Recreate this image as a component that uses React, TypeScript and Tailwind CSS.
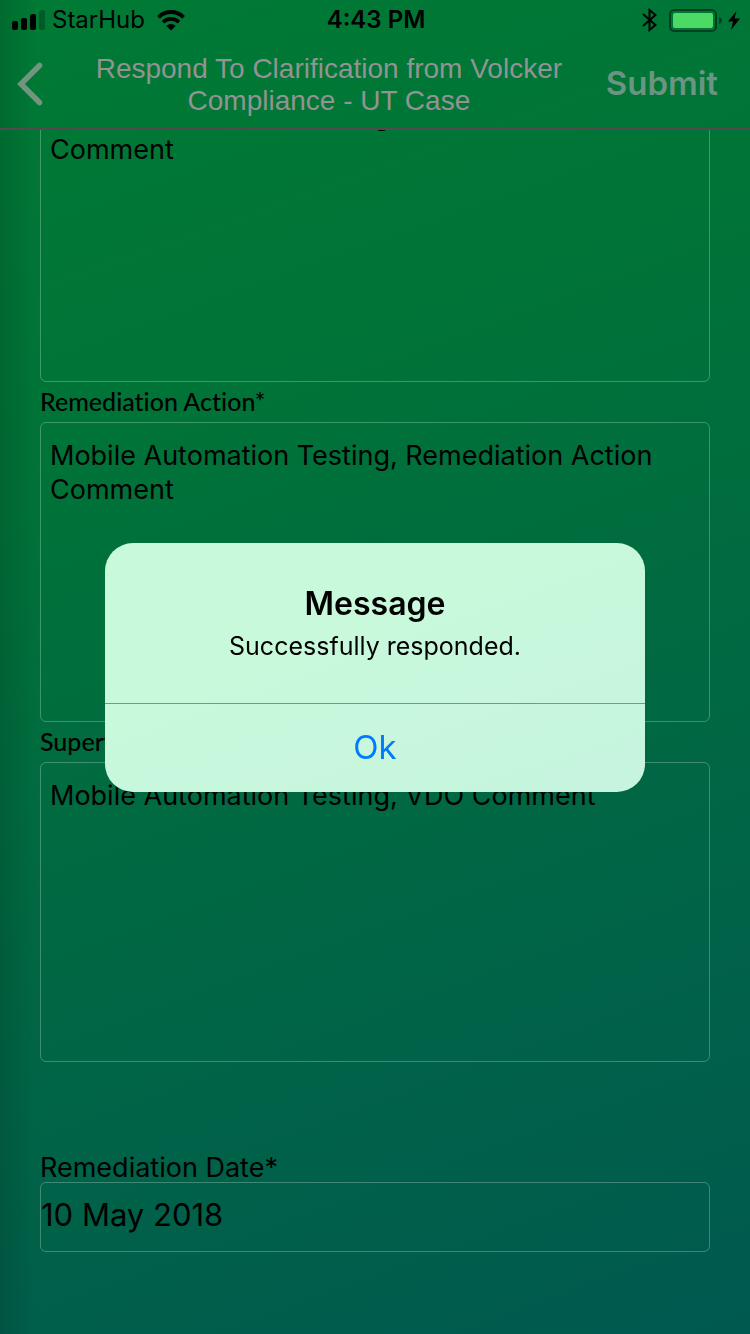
import React from "react";

function SignalIcon() {
  return (
    <svg width="34" height="20" viewBox="0 0 34 20" aria-hidden="true">
      <rect x="0" y="11" width="6" height="9" rx="2" />
      <rect x="9" y="8" width="6" height="12" rx="2" />
      <rect x="18" y="4" width="6" height="16" rx="2" />
      <rect x="27" y="0" width="6" height="20" rx="2" opacity="0.25" />
    </svg>
  );
}

function WifiIcon() {
  return (
    <svg width="28" height="21" viewBox="0 0 28 21" aria-hidden="true">
      <path d="M1.500 7.300a17.600 17.600 0 0 1 25 0" fill="none" stroke="#000" strokeWidth="4" />
      <path d="M6 12.200a11.300 11.300 0 0 1 16 0" fill="none" stroke="#000" strokeWidth="3.600" />
      <path d="M14 20.500 9.400 16a6.500 6.500 0 0 1 9.200 0z" />
    </svg>
  );
}

function BluetoothIcon() {
  return (
    <svg width="15" height="24" viewBox="0 0 15 24" aria-hidden="true">
      <path d="M1 6 13.500 17 7.500 22V2L13.500 7 1 18" fill="none" stroke="#000" strokeWidth="2" />
    </svg>
  );
}

function BatteryIcon() {
  return (
    <svg width="53" height="23" viewBox="0 0 53 23" aria-hidden="true">
      <rect x="1" y="1" width="46" height="21" rx="4.500" fill="none" stroke="#00401f" strokeWidth="2" />
      <rect x="4" y="4" width="40" height="15" rx="2" fill="#4cd964" />
      <path d="M50 8c1.700.5 3 1.900 3 3.500S51.700 14.500 50 15z" fill="#00401f" />
    </svg>
  );
}

function BoltIcon() {
  return (
    <svg width="12" height="19" viewBox="0 0 12 19" aria-hidden="true">
      <path d="M8.500 0 0 10.500h5L3 19l9-11.500H6.600z" />
    </svg>
  );
}

function CommentBox({ id, value, label }: { id: string; value: string; label?: string }) {
  return (
    <textarea
      id={id}
      aria-label={label}
      defaultValue={value}
      className="block h-[300px] w-full resize-none overflow-hidden rounded-md border border-white/25 bg-transparent px-[9px] py-4 text-[27px] leading-[34px] outline-none"
    />
  );
}

function CommentField({ id, label, value }: { id: string; label: string; value: string }) {
  return (
    <div>
      <label
        htmlFor={id}
        className="flex h-10 items-center font-['Lato',sans-serif] text-[25px] font-medium [font-variant-ligatures:none]"
      >
        {label}
      </label>
      <CommentBox id={id} value={value} />
    </div>
  );
}

export default function App() {
  return (
    <div className="relative flex h-screen flex-col overflow-hidden bg-linear-[160deg,#007a34_0%,#007338_30%,#006645_65%,#005950_100%] font-['Inter',sans-serif] text-black">
      <div className="pointer-events-none absolute inset-y-0 left-0 w-9 bg-linear-to-r from-black/12 to-transparent" />

      <header className="relative shrink-0 border-b-2 border-[#534b4b]">
        <div className="grid h-10 grid-cols-[1fr_auto_1fr] items-center pr-2.5 pl-3 text-2xl">
          <div className="flex items-center gap-1.5">
            <SignalIcon />
            <span>StarHub</span>
            <span className="pl-1.5">
              <WifiIcon />
            </span>
          </div>
          <span className="font-semibold">4:43 PM</span>
          <div className="flex items-center justify-end gap-1.5">
            <BluetoothIcon />
            <span className="pl-1.5">
              <BatteryIcon />
            </span>
            <BoltIcon />
          </div>
        </div>
        <div className="flex h-[88px] items-center pr-8 pl-4">
          <button type="button" aria-label="Back" className="text-[#739580]">
            <svg width="28" height="44" viewBox="0 0 28 44" aria-hidden="true">
              <path d="M23.500 3.500 5 22l18.500 18.500" fill="none" stroke="currentColor" strokeWidth="5.500" strokeLinecap="round" />
            </svg>
          </button>
          <h1 className="flex-1 pt-0.5 pr-7 pl-9 text-center font-['Liberation_Sans',sans-serif] text-[28px] leading-8 text-[#939393]">
            Respond To Clarification from Volcker Compliance - UT Case
          </h1>
          <button type="button" className="text-[33px] font-semibold text-[#6c9483]">
            Submit
          </button>
        </div>
      </header>

      <main className="relative min-h-0 flex-1 overflow-hidden px-10">
        <form className="-mt-12">
          <CommentBox id="root-cause" label="Root Cause" value="Mobile Automation Testing, Root Cause Action Comment" />
          <CommentField
            id="remediation"
            label="Remediation Action*"
            value="Mobile Automation Testing, Remediation Action Comment"
          />
          <CommentField id="supervisor" label="Supervisor Comment*" value="Mobile Automation Testing, VDO Comment" />
          <div className="pt-[92px]">
            <label htmlFor="date" className="block text-[27px] leading-7">
              Remediation Date*
            </label>
            <input
              id="date"
              type="text"
              defaultValue="10 May 2018"
              className="block h-[70px] w-full rounded-md border border-white/25 bg-transparent pb-1.5 text-[31px] outline-none"
            />
          </div>
        </form>
      </main>

      <div className="fixed inset-0 flex items-center justify-center">
        <div
          role="alertdialog"
          aria-labelledby="alert-title"
          aria-describedby="alert-text"
          className="w-[540px] overflow-hidden rounded-[28px] bg-linear-[160deg,#c8f9db_40%,#c6f4df]"
        >
          <div className="flex h-40 flex-col items-center pt-[41px] text-center">
            <h2 id="alert-title" className="text-[32px] leading-10 font-semibold">
              Message
            </h2>
            <p id="alert-text" className="pt-1 text-[25px] leading-9">
              Successfully responded.
            </p>
          </div>
          <div className="h-px bg-[#2fbe83]" />
          <button type="button" className="block h-[88px] w-full text-[33px] text-[#007aff]">
            Ok
          </button>
        </div>
      </div>
    </div>
  );
}
